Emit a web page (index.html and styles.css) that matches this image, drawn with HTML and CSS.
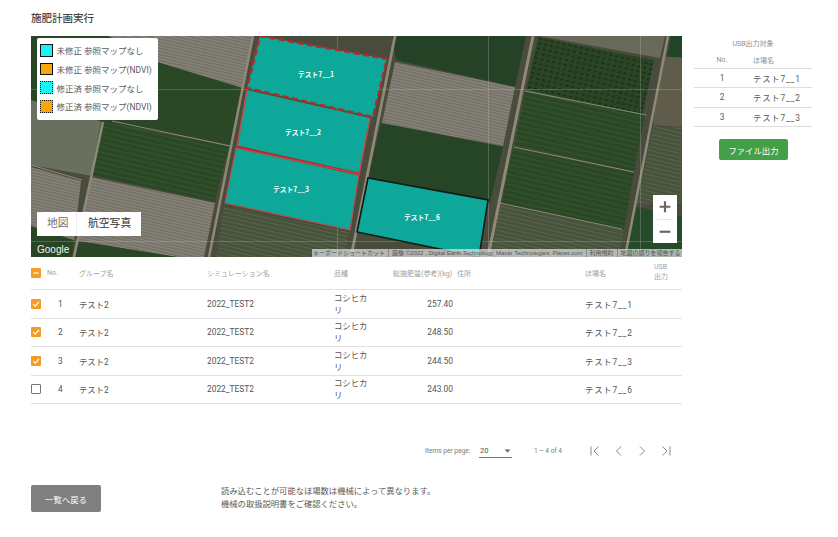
FILE: index.html
```html
<!DOCTYPE html>
<html lang="ja">
<head>
<meta charset="utf-8">
<title>施肥計画実行</title>
<link rel="stylesheet" href="styles.css">
</head>
<body>
<main class="page">
  <h1 class="title">施肥計画実行</h1>
  <div class="top">
    <section class="map">
      <svg class="sat" viewBox="31 36 651 221" width="651" height="221" xmlns="http://www.w3.org/2000/svg">
        <defs>
          <pattern id="gray" width="3" height="3" patternUnits="userSpaceOnUse" patternTransform="rotate(13)">
            <rect width="3" height="3" fill="#77736a"/><rect width="3" height="1" fill="#8b877c"/>
          </pattern>
          <pattern id="green" width="8" height="5" patternUnits="userSpaceOnUse" patternTransform="rotate(13)">
            <rect width="8" height="5" fill="#2b4726"/><rect width="8" height="1" fill="#35552f"/>
          </pattern>
          <pattern id="dots" width="6" height="5" patternUnits="userSpaceOnUse" patternTransform="rotate(13)">
            <rect width="6" height="5" fill="#2b4526"/><rect width="3" height="2" fill="#1e3319"/>
          </pattern>
          <pattern id="olive" width="5" height="4" patternUnits="userSpaceOnUse" patternTransform="rotate(13)">
            <rect width="5" height="4" fill="#46523a"/><rect width="5" height="1" fill="#596350"/>
          </pattern>
          <filter id="soft"><feGaussianBlur stdDeviation="0.6"/></filter>
        </defs>
        <g filter="url(#soft)">
          <rect x="31" y="36" width="651" height="221" fill="#4a4b3c"/>
          <polygon points="31,36 110,36 160,63 243,88 232,143 100,122 31,100" fill="#2a4527"/>
          <polygon points="108,36 253,36 242,88 160,63" fill="url(#gray)"/>
          <polygon points="160,63 242,88 231,145 112,121" fill="#294626"/>
          <polygon points="31,100 103,122 92,176 31,165" fill="#6a7061"/>
          <polygon points="101,122 229,146 215,202 91,175" fill="url(#green)"/>
          <polygon points="31,167 81,181 74,242 31,226" fill="url(#gray)"/>
          <polygon points="31,226 74,240 72,257 31,257" fill="#2a4527"/>
          <polygon points="91,177 215,203 204,257 177,257 78,241" fill="url(#gray)"/>
          <polygon points="78,241 177,257 73,257" fill="#2a4527"/>
          <polygon points="224,206 349,232 344,257 216,257" fill="url(#olive)"/>
          <polygon points="392,36 526,36 515,87 396,60" fill="#264326"/>
          <polygon points="395,62 515,87 503,146 382,123" fill="url(#gray)"/>
          <polygon points="381,123 503,147 490,203 368,178" fill="#264526"/>
          <polygon points="538,37 654,60 643,114 526,90" fill="url(#dots)"/>
          <polygon points="525,91 645,115 634,172 514,147" fill="url(#green)"/>
          <polygon points="513,148 634,173 624,230 501,203" fill="url(#green)"/>
          <polygon points="498,204 624,230 618,257 488,257" fill="url(#olive)"/>
          <polygon points="540,36 665,36 660,58" fill="#6b6a5a"/>
          <polygon points="662,56 682,58 682,127 653,125" fill="#5f5b4b"/>
          <polygon points="653,126 682,128 682,204 637,204" fill="url(#olive)"/>
          <polygon points="671,36 682,36 682,57 667,57" fill="#22452a"/>
          <polygon points="634,206 682,217 682,257 626,257" fill="#284b29"/>
          <g fill="none" stroke="#8f8a78" stroke-linecap="butt">
            <path d="M253 36 L209 257" stroke-width="2.500"/>
            <path d="M395 36 L351 257" stroke-width="2.800"/>
            <path d="M533 36 L488 257" stroke-width="3"/>
            <path d="M668 36 L625 257" stroke-width="2.500"/>
            <path d="M103 122 L74 257" stroke-width="2.500"/>
          </g>
          <g fill="none" stroke="#a09a88" stroke-width=".8">
            <path d="M112 121 L230 146"/>
            <path d="M525 91 L646 115"/>
            <path d="M514 147 L634 172"/>
            <path d="M500 203 L622 229"/>
            <path d="M31 165 L82 180"/>
          </g>
          <g stroke="#c9cfc2" stroke-opacity=".25" stroke-width="1">
            <path d="M31 89.500 H682"/>
            <path d="M31 241.500 H682"/>
            <path d="M337.500 36 V257"/>
            <path d="M488.500 36 V257"/>
            <path d="M640.500 36 V257"/>
          </g>
          <polygon points="260,36 387,59 373,117 247,88" fill="#10a899"/>
          <polygon points="247,90 370,118 359,174 237,147" fill="#10a899"/>
          <polygon points="236,148 359,174 350,230 225,203" fill="#10a899"/>
          <polygon points="368,178 488,200 479,257 357,232" fill="#10a899"/>
          <polygon points="260,36 387,59 373,117 247,88" fill="none" stroke="#b32a2c" stroke-width="2.500" stroke-dasharray="6 3.500"/>
          <path d="M247 90 L237 147 M370 118 L359 174" fill="none" stroke="#b8504a" stroke-width="1.600"/>
          <path d="M237 147 L359 174" fill="none" stroke="#b32a2c" stroke-width="3"/>
          <polygon points="236,148 359,174 350,230 225,203" fill="none" stroke="#b8504a" stroke-width="1.200"/>
          <polygon points="368,178 488,200 479,257 357,232" fill="none" stroke="#0e1a16" stroke-width="1.600"/>
        </g>
        <g class="field-labels">
          <text x="316" y="76.500">テスト7__1</text>
          <text x="303" y="134.500">テスト7__2</text>
          <text x="291" y="191.500">テスト7__3</text>
          <text x="422" y="219.500">テスト7__6</text>
        </g>
      </svg>

      <div class="legend">
        <div class="legend-row"><span class="swatch swatch-cyan"></span>未修正 参照マップなし</div>
        <div class="legend-row"><span class="swatch swatch-orange"></span>未修正 参照マップ(NDVI)</div>
        <div class="legend-row"><span class="swatch swatch-cyan swatch-dotted"></span>修正済 参照マップなし</div>
        <div class="legend-row"><span class="swatch swatch-orange swatch-dotted"></span>修正済 参照マップ(NDVI)</div>
      </div>

      <div class="maptype">
        <span class="maptype-item">地図</span>
        <span class="maptype-item maptype-active">航空写真</span>
      </div>

      <div class="zoom">
        <svg width="24" height="24" viewBox="0 0 24 24"><path d="M12 6.500V17.500M6.500 12H17.500" stroke="#666" stroke-width="2.200"/></svg>
        <span class="zoom-sep"></span>
        <svg width="24" height="24" viewBox="0 0 24 24"><path d="M6.500 12H17.500" stroke="#666" stroke-width="2.200"/></svg>
      </div>

      <span class="google">Google</span>
      <div class="attrib">
        <span>キーボードショートカット</span><span>画像 ©2022 , Digital Earth Technology, Maxar Technologies, Planet.com</span><span>利用規約</span><span>地図の誤りを報告する</span>
      </div>
    </section>

    <aside class="side">
      <div class="side-title">USB出力対象</div>
      <div class="side-row side-head"><span class="side-no">No.</span><span>ほ場名</span></div>
      <div class="side-row"><span class="side-no">1</span><span class="field-name">テスト7__1</span></div>
      <div class="side-row"><span class="side-no">2</span><span class="field-name">テスト7__2</span></div>
      <div class="side-row"><span class="side-no">3</span><span class="field-name">テスト7__3</span></div>
      <button class="btn btn-green" type="button">ファイル出力</button>
    </aside>
  </div>

  <section class="table">
    <div class="row row-head">
      <span class="cell"><span class="check check-on"><svg width="10" height="10" viewBox="0 0 10 10"><path d="M2.500 5H7.500" stroke="#fff" stroke-width="1.300"/></svg></span></span>
      <span class="cell">No.</span>
      <span class="cell">グループ名</span>
      <span class="cell">シミュレーション名</span>
      <span class="cell">品種</span>
      <span class="cell">総施肥量(参考)(kg)</span>
      <span class="cell">住所</span>
      <span class="cell">ほ場名</span>
      <span class="cell cell-usb">USB 出力</span>
    </div>
    <div class="row">
      <span class="cell"><span class="check check-on"><svg width="10" height="10" viewBox="0 0 10 10"><path d="M2.200 5.200L4.200 7.200L7.900 3" fill="none" stroke="#fff" stroke-width="1.200"/></svg></span></span>
      <span class="cell cell-no">1</span><span class="cell">テスト2</span><span class="cell">2022_TEST2</span><span class="cell cell-variety">コシヒカリ</span><span class="cell cell-num">257.40</span><span class="cell"></span><span class="cell field-name">テスト7__1</span><span class="cell"></span>
    </div>
    <div class="row">
      <span class="cell"><span class="check check-on"><svg width="10" height="10" viewBox="0 0 10 10"><path d="M2.200 5.200L4.200 7.200L7.900 3" fill="none" stroke="#fff" stroke-width="1.200"/></svg></span></span>
      <span class="cell cell-no">2</span><span class="cell">テスト2</span><span class="cell">2022_TEST2</span><span class="cell cell-variety">コシヒカリ</span><span class="cell cell-num">248.50</span><span class="cell"></span><span class="cell field-name">テスト7__2</span><span class="cell"></span>
    </div>
    <div class="row">
      <span class="cell"><span class="check check-on"><svg width="10" height="10" viewBox="0 0 10 10"><path d="M2.200 5.200L4.200 7.200L7.900 3" fill="none" stroke="#fff" stroke-width="1.200"/></svg></span></span>
      <span class="cell cell-no">3</span><span class="cell">テスト2</span><span class="cell">2022_TEST2</span><span class="cell cell-variety">コシヒカリ</span><span class="cell cell-num">244.50</span><span class="cell"></span><span class="cell field-name">テスト7__3</span><span class="cell"></span>
    </div>
    <div class="row">
      <span class="cell"><span class="check"></span></span>
      <span class="cell cell-no">4</span><span class="cell">テスト2</span><span class="cell">2022_TEST2</span><span class="cell cell-variety">コシヒカリ</span><span class="cell cell-num">243.00</span><span class="cell"></span><span class="cell field-name">テスト7__6</span><span class="cell"></span>
    </div>
  </section>

  <div class="pager">
    <span class="pager-label">Items per page:</span>
    <span class="pager-select"><span>20</span><svg width="7" height="4" viewBox="0 0 7 4"><path d="M0.500 0.500H6.500L3.500 3.500Z" fill="#666"/></svg></span>
    <span class="pager-range">1 – 4 of 4</span>
    <span class="pager-icons">
      <svg width="12" height="12" viewBox="0 0 12 12"><path d="M2 1.500V10.500M9.500 1.500L5 6L9.500 10.500" fill="none" stroke="#8a8a8a" stroke-width="1"/></svg>
      <svg width="12" height="12" viewBox="0 0 12 12"><path d="M8 1.500L3.500 6L8 10.500" fill="none" stroke="#8a8a8a" stroke-width="1"/></svg>
      <svg width="12" height="12" viewBox="0 0 12 12"><path d="M4 1.500L8.500 6L4 10.500" fill="none" stroke="#8a8a8a" stroke-width="1"/></svg>
      <svg width="12" height="12" viewBox="0 0 12 12"><path d="M10 1.500V10.500M2.500 1.500L7 6L2.500 10.500" fill="none" stroke="#8a8a8a" stroke-width="1"/></svg>
    </span>
  </div>

  <div class="footer">
    <button class="btn btn-gray" type="button">一覧へ戻る</button>
    <p class="notice">読み込むことが可能なほ場数は機械によって異なります。<br>機械の取扱説明書をご確認ください。</p>
  </div>
</main>
</body>
</html>
```

FILE: styles.css
```css
* { box-sizing: border-box; }

html, body {
  margin: 0;
  padding: 0;
  background: #fff;
}

body {
  font-family: Roboto, "Noto Sans CJK JP", sans-serif;
  font-size: 8.400px;
  color: #4d4d4d;
  width: 838px;
  height: 537px;
  overflow: hidden;
}

.page {
  padding: 12px 0 0 31px;
}

.title {
  margin: 0 0 10px;
  font-size: 10.500px;
  line-height: 14px;
  font-weight: 500;
  color: #444;
}

.top {
  display: flex;
  gap: 12px;
  align-items: flex-start;
}

/* map */
.map {
  position: relative;
  width: 651px;
  height: 221px;
  overflow: hidden;
  flex: none;
}

.sat {
  display: block;
}

.field-labels text {
  font-family: "Noto Sans CJK JP", sans-serif;
  font-size: 6.800px;
  font-weight: 700;
  fill: #fff;
  text-anchor: middle;
}

.legend {
  position: absolute;
  left: 6px;
  top: 2px;
  width: 121px;
  height: 82px;
  padding: 3px 0 0 3px;
  background: #fff;
  border-radius: 2px;
}

.legend-row {
  display: flex;
  align-items: center;
  gap: 4px;
  height: 18.700px;
  font-size: 8.500px;
  white-space: nowrap;
  color: #5a5a5a;
}

.swatch {
  width: 12.500px;
  height: 12.500px;
  flex: none;
  border: 1.500px solid #111;
}

.swatch-cyan { background: #19f2f6; }
.swatch-orange { background: #f9a70d; }
.swatch-dotted { border-style: dotted; }

.maptype {
  position: absolute;
  left: 6px;
  top: 176px;
  width: 104px;
  height: 24px;
  display: flex;
  background: #fff;
  font-size: 10.800px;
  line-height: 24px;
  white-space: nowrap;
}

.maptype-item {
  flex: none;
  width: 40px;
  padding-left: 10px;
  color: #6e6e6e;
  border-right: 1px solid #eee;
}

.maptype-active {
  width: 64px;
  padding-left: 11px;
  color: #333;
  border-right: 0;
}

.zoom {
  position: absolute;
  left: 622px;
  top: 159px;
  width: 24px;
  height: 48px;
  background: #fff;
  display: flex;
  flex-direction: column;
}

.zoom-sep {
  display: block;
  height: 0;
  margin: 0 4px;
  border-top: 1px solid #e6e6e6;
}

.zoom svg { display: block; flex: none; height: 23.500px; }

.google {
  position: absolute;
  left: 6px;
  bottom: 1px;
  font-family: "Liberation Sans", sans-serif;
  font-size: 10px;
  line-height: 13px;
  color: #eef2ee;
  font-weight: 400;
}

.attrib {
  position: absolute;
  right: 0;
  bottom: 0;
  height: 8px;
  width: 370px;
  display: flex;
  gap: 3px;
  padding: 0 0 0 1px;
  background: rgba(225, 225, 225, .72);
  font-family: "Liberation Sans", "Noto Sans CJK JP", sans-serif;
  font-size: 6px;
  line-height: 8px;
  color: #555;
  white-space: nowrap;
  overflow: hidden;
}

.attrib span + span {
  padding-left: 3px;
  border-left: 1px solid #888;
}

/* side */
.side {
  width: 118px;
  flex: none;
}

.side-title {
  height: 16px;
  line-height: 16px;
  text-align: center;
  font-size: 7px;
  color: #8a8a8a;
}

.side-row {
  display: flex;
  align-items: center;
  height: 19.300px;
  border-bottom: 1px solid #ddd;
  color: #5a5a5a;
}

.side-head {
  height: 17px;
  font-size: 7px;
  color: #8e8e8e;
}

.side-no {
  width: 59px;
  padding-right: 3px;
  text-align: center;
}

.field-name {
  letter-spacing: .8px;
}

.btn {
  display: block;
  border: 0;
  border-radius: 2px;
  color: #fff;
  font-family: "Noto Sans CJK JP", sans-serif;
  font-size: 8.400px;
  padding: 0;
}

.btn-green {
  width: 69px;
  height: 21px;
  margin: 12.500px 0 0 25px;
  background: #43a047;
}

.btn-gray {
  width: 70px;
  height: 27px;
  flex: none;
  background: #808080;
}

/* table */
.table {
  width: 651px;
  margin-top: 2px;
}

.row {
  display: grid;
  grid-template-columns: 16px 32px 128px 127px 59px 64px 128px 69px 28px;
  height: 28.500px;
  align-items: center;
  border-bottom: 1px solid #e0e0e0;
  color: #555;
}

.row-head {
  height: 31px;
  font-size: 7px;
  color: #a0a0a0;
  padding-bottom: 3px;
}

.cell { display: block; }
.cell-no { padding-left: 11px; }

.cell-variety {
  width: 38px;
  line-height: 12px;
}

.cell-num {
  text-align: right;
  padding-right: 4px;
}

.cell-usb {
  width: 18px;
  line-height: 10px;
  margin-top: -1px;
}

.check {
  display: block;
  width: 10px;
  height: 10px;
  border: 1px solid #777;
  border-radius: 1px;
  background: #fff;
}

.check-on {
  border: 0;
  background: #f59c26;
}

.check svg { display: block; }

/* pager */
.pager {
  display: flex;
  align-items: center;
  width: 651px;
  height: 20px;
  margin-top: 37px;
  padding-left: 394px;
  font-size: 6.600px;
  color: #7a7a7a;
}

.pager-label {
  width: 54px;
  flex: none;
}

.pager-select {
  display: flex;
  align-items: center;
  justify-content: space-between;
  width: 33px;
  height: 14px;
  padding: 0 1px;
  border-bottom: 1px solid #777;
  color: #555;
  font-size: 7.500px;
  flex: none;
}

.pager-range {
  width: 55px;
  margin-left: 22px;
  flex: none;
}

.pager-icons {
  display: flex;
  gap: 11.500px;
  flex: none;
}

.pager-icons svg { display: block; }

/* footer */
.footer {
  display: flex;
  gap: 120px;
  margin-top: 24px;
}

.notice {
  margin: 0;
  font-size: 8.300px;
  line-height: 13px;
  color: #5a5a5a;
  white-space: nowrap;
}
```
